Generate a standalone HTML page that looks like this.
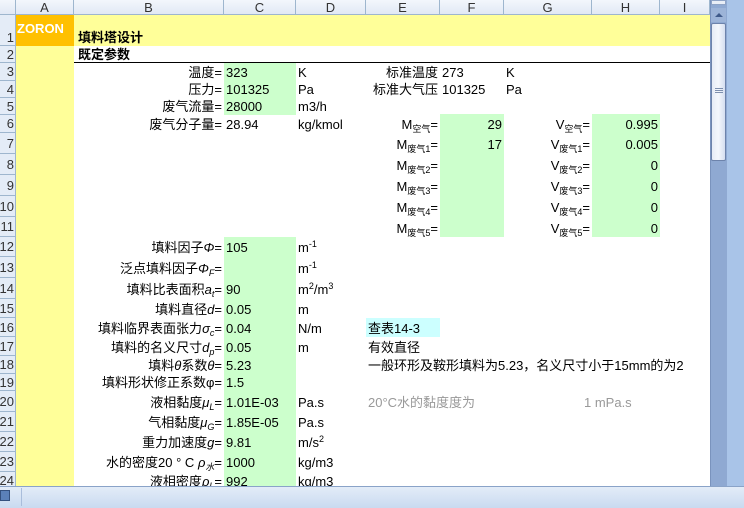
<!DOCTYPE html>
<html><head><meta charset="utf-8"><style>
*{margin:0;padding:0;box-sizing:border-box}
body{width:744px;height:508px;overflow:hidden;background:#fff;position:relative;font-family:"Liberation Sans","Noto Sans CJK SC",sans-serif;font-size:13px;color:#000}
.a{position:absolute}
.hd{position:absolute;background:linear-gradient(#f3f7fc,#e1e9f5);border-right:1px solid #9eb6ce;border-bottom:1px solid #9eb6ce;color:#333;font-size:13px;text-align:center;line-height:15px}
.rh{position:absolute;left:0;width:16px;background:#e4ecf7;border-bottom:1px solid #9eb6ce;border-right:1px solid #9eb6ce;color:#333;font-size:13px;text-align:right;padding-right:1px;overflow:hidden;display:flex;align-items:center;justify-content:flex-end}
.c{position:absolute;white-space:nowrap;display:flex;align-items:flex-end;padding:0 2px 0 2px}
.c>span{display:block;line-height:16px}
.r{justify-content:flex-end}
sub{font-size:9px;vertical-align:-3px;line-height:0}
sup{font-size:9px;vertical-align:5px;line-height:0}
i{font-style:italic}
.g{color:#999}
</style></head><body>
<div class="a" style="left:16px;top:15px;width:58px;height:475px;background:#ffff99"></div>
<div class="a" style="left:16px;top:15px;width:58px;height:31px;background:#ffc000"></div>
<div class="a" style="left:74px;top:15px;width:636px;height:31px;background:#ffff99"></div>
<div class="a" style="left:224px;top:63px;width:72px;height:52px;background:#ccffcc"></div>
<div class="a" style="left:224px;top:237px;width:72px;height:253px;background:#ccffcc"></div>
<div class="a" style="left:440px;top:114px;width:64px;height:123px;background:#ccffcc"></div>
<div class="a" style="left:592px;top:114px;width:68px;height:123px;background:#ccffcc"></div>
<div class="a" style="left:366px;top:318px;width:74px;height:19px;background:#ccffff"></div>
<div class="a" style="left:74px;top:62px;width:636px;height:1px;background:#000"></div>

<div class="hd" style="left:0;top:0;width:16px;height:15px"></div>
<div class="hd" style="left:16px;top:0;width:58px;height:15px">A</div>
<div class="hd" style="left:74px;top:0;width:150px;height:15px">B</div>
<div class="hd" style="left:224px;top:0;width:72px;height:15px">C</div>
<div class="hd" style="left:296px;top:0;width:70px;height:15px">D</div>
<div class="hd" style="left:366px;top:0;width:74px;height:15px">E</div>
<div class="hd" style="left:440px;top:0;width:64px;height:15px">F</div>
<div class="hd" style="left:504px;top:0;width:88px;height:15px">G</div>
<div class="hd" style="left:592px;top:0;width:68px;height:15px">H</div>
<div class="hd" style="left:660px;top:0;width:50px;height:15px">I</div>

<div class="rh" style="top:15px;height:31px;align-items:flex-end">1</div>
<div class="rh" style="top:46px;height:17px">2</div>
<div class="rh" style="top:63px;height:18px">3</div>
<div class="rh" style="top:81px;height:17px">4</div>
<div class="rh" style="top:98px;height:17px">5</div>
<div class="rh" style="top:115px;height:18px">6</div>
<div class="rh" style="top:133px;height:21px">7</div>
<div class="rh" style="top:154px;height:21px">8</div>
<div class="rh" style="top:175px;height:21px">9</div>
<div class="rh" style="top:196px;height:21px">10</div>
<div class="rh" style="top:217px;height:20px">11</div>
<div class="rh" style="top:237px;height:20px">12</div>
<div class="rh" style="top:257px;height:21px">13</div>
<div class="rh" style="top:278px;height:21px">14</div>
<div class="rh" style="top:299px;height:19px">15</div>
<div class="rh" style="top:318px;height:19px">16</div>
<div class="rh" style="top:337px;height:19px">17</div>
<div class="rh" style="top:356px;height:18px">18</div>
<div class="rh" style="top:374px;height:17px">19</div>
<div class="rh" style="top:391px;height:21px">20</div>
<div class="rh" style="top:412px;height:20px">21</div>
<div class="rh" style="top:432px;height:20px">22</div>
<div class="rh" style="top:452px;height:20px">23</div>
<div class="rh" style="top:472px;height:18px">24</div>

<div class="a" style="left:17px;top:21px;color:#fff;font-weight:bold;font-size:13px">ZORON</div>
<div class="c" style="left:76px;top:15px;height:31px;font-weight:bold"><span>填料塔设计</span></div>
<div class="c" style="left:76px;top:46px;height:17px;font-weight:bold"><span>既定参数</span></div>

<div class="c r" style="left:74px;top:63px;width:150px;height:18px"><span>温度=</span></div>
<div class="c" style="left:224px;top:63px;height:18px"><span>323</span></div>
<div class="c" style="left:296px;top:63px;height:18px"><span>K</span></div>
<div class="c r" style="left:366px;top:63px;width:74px;height:18px"><span>标准温度</span></div>
<div class="c" style="left:440px;top:63px;height:18px"><span>273</span></div>
<div class="c" style="left:504px;top:63px;height:18px"><span>K</span></div>
<div class="c r" style="left:74px;top:81px;width:150px;height:17px"><span>压力=</span></div>
<div class="c" style="left:224px;top:81px;height:17px"><span>101325</span></div>
<div class="c" style="left:296px;top:81px;height:17px"><span>Pa</span></div>
<div class="c r" style="left:340px;top:81px;width:100px;height:17px"><span>标准大气压</span></div>
<div class="c" style="left:440px;top:81px;height:17px"><span>101325</span></div>
<div class="c" style="left:504px;top:81px;height:17px"><span>Pa</span></div>
<div class="c r" style="left:74px;top:98px;width:150px;height:17px"><span>废气流量=</span></div>
<div class="c" style="left:224px;top:98px;height:17px"><span>28000</span></div>
<div class="c" style="left:296px;top:98px;height:17px"><span>m3/h</span></div>
<div class="c r" style="left:74px;top:115px;width:150px;height:18px"><span>废气分子量=</span></div>
<div class="c" style="left:224px;top:115px;height:18px"><span>28.94</span></div>
<div class="c" style="left:296px;top:115px;height:18px"><span>kg/kmol</span></div>

<div class="c r" style="left:366px;top:115px;width:74px;height:18px"><span>M<sub>空气</sub>=</span></div>
<div class="c r" style="left:440px;top:115px;width:64px;height:18px"><span>29</span></div>
<div class="c r" style="left:504px;top:115px;width:88px;height:18px"><span>V<sub>空气</sub>=</span></div>
<div class="c r" style="left:592px;top:115px;width:68px;height:18px"><span>0.995</span></div>
<div class="c r" style="left:366px;top:133px;width:74px;height:20px"><span>M<sub>废气1</sub>=</span></div>
<div class="c r" style="left:440px;top:133px;width:64px;height:20px"><span>17</span></div>
<div class="c r" style="left:504px;top:133px;width:88px;height:20px"><span>V<sub>废气1</sub>=</span></div>
<div class="c r" style="left:592px;top:133px;width:68px;height:20px"><span>0.005</span></div>
<div class="c r" style="left:366px;top:154px;width:74px;height:20px"><span>M<sub>废气2</sub>=</span></div>
<div class="c r" style="left:504px;top:154px;width:88px;height:20px"><span>V<sub>废气2</sub>=</span></div>
<div class="c r" style="left:592px;top:154px;width:68px;height:20px"><span>0</span></div>
<div class="c r" style="left:366px;top:175px;width:74px;height:20px"><span>M<sub>废气3</sub>=</span></div>
<div class="c r" style="left:504px;top:175px;width:88px;height:20px"><span>V<sub>废气3</sub>=</span></div>
<div class="c r" style="left:592px;top:175px;width:68px;height:20px"><span>0</span></div>
<div class="c r" style="left:366px;top:196px;width:74px;height:20px"><span>M<sub>废气4</sub>=</span></div>
<div class="c r" style="left:504px;top:196px;width:88px;height:20px"><span>V<sub>废气4</sub>=</span></div>
<div class="c r" style="left:592px;top:196px;width:68px;height:20px"><span>0</span></div>
<div class="c r" style="left:366px;top:217px;width:74px;height:20px"><span>M<sub>废气5</sub>=</span></div>
<div class="c r" style="left:504px;top:217px;width:88px;height:20px"><span>V<sub>废气5</sub>=</span></div>
<div class="c r" style="left:592px;top:217px;width:68px;height:20px"><span>0</span></div>

<div class="c r" style="left:40px;top:237px;width:184px;height:19px"><span>填料因子<i>Φ</i>=</span></div>
<div class="c" style="left:224px;top:237px;height:19px"><span>105</span></div>
<div class="c" style="left:296px;top:237px;height:19px"><span>m<sup>-1</sup></span></div>
<div class="c r" style="left:40px;top:257px;width:184px;height:20px"><span>泛点填料因子<i>Φ<sub>F</sub></i>=</span></div>
<div class="c" style="left:296px;top:257px;height:20px"><span>m<sup>-1</sup></span></div>
<div class="c r" style="left:40px;top:278px;width:184px;height:20px"><span>填料比表面积<i>a<sub>t</sub></i>=</span></div>
<div class="c" style="left:224px;top:278px;height:20px"><span>90</span></div>
<div class="c" style="left:296px;top:278px;height:20px"><span>m<sup>2</sup>/m<sup>3</sup></span></div>
<div class="c r" style="left:40px;top:299px;width:184px;height:19px"><span>填料直径<i>d</i>=</span></div>
<div class="c" style="left:224px;top:299px;height:19px"><span>0.05</span></div>
<div class="c" style="left:296px;top:299px;height:19px"><span>m</span></div>
<div class="c r" style="left:40px;top:318px;width:184px;height:19px"><span>填料临界表面张力<i>σ<sub>c</sub></i>=</span></div>
<div class="c" style="left:224px;top:318px;height:19px"><span>0.04</span></div>
<div class="c" style="left:296px;top:318px;height:19px"><span>N/m</span></div>
<div class="c" style="left:366px;top:318px;height:19px"><span>查表14-3</span></div>
<div class="c r" style="left:40px;top:337px;width:184px;height:19px"><span>填料的名义尺寸<i>d<sub>p</sub></i>=</span></div>
<div class="c" style="left:224px;top:337px;height:19px"><span>0.05</span></div>
<div class="c" style="left:296px;top:337px;height:19px"><span>m</span></div>
<div class="c" style="left:366px;top:337px;height:19px"><span>有效直径</span></div>
<div class="c r" style="left:40px;top:356px;width:184px;height:18px"><span>填料<i>θ</i>系数<i>θ</i>=</span></div>
<div class="c" style="left:224px;top:356px;height:18px"><span>5.23</span></div>
<div class="c" style="left:366px;top:356px;height:18px"><span>一般环形及鞍形填料为5.23，名义尺寸小于15mm的为2</span></div>
<div class="c r" style="left:40px;top:374px;width:184px;height:17px"><span>填料形状修正系数φ=</span></div>
<div class="c" style="left:224px;top:374px;height:17px"><span>1.5</span></div>
<div class="c r" style="left:40px;top:391px;width:184px;height:20px"><span>液相黏度<i>μ<sub>L</sub></i>=</span></div>
<div class="c" style="left:224px;top:391px;height:20px"><span>1.01E-03</span></div>
<div class="c" style="left:296px;top:391px;height:20px"><span>Pa.s</span></div>
<div class="c g" style="left:366px;top:391px;height:20px"><span>20°C水的黏度度为</span></div>
<div class="c g" style="left:582px;top:391px;height:20px"><span>1 mPa.s</span></div>
<div class="c r" style="left:40px;top:412px;width:184px;height:19px"><span>气相黏度<i>μ<sub>G</sub></i>=</span></div>
<div class="c" style="left:224px;top:412px;height:19px"><span>1.85E-05</span></div>
<div class="c" style="left:296px;top:412px;height:19px"><span>Pa.s</span></div>
<div class="c r" style="left:40px;top:432px;width:184px;height:19px"><span>重力加速度<i>g</i>=</span></div>
<div class="c" style="left:224px;top:432px;height:19px"><span>9.81</span></div>
<div class="c" style="left:296px;top:432px;height:19px"><span>m/s<sup>2</sup></span></div>
<div class="c r" style="left:40px;top:452px;width:184px;height:19px"><span>水的密度20 ° C <i>ρ<sub>水</sub></i>=</span></div>
<div class="c" style="left:224px;top:452px;height:19px"><span>1000</span></div>
<div class="c" style="left:296px;top:452px;height:19px"><span>kg/m3</span></div>
<div class="c r" style="left:40px;top:472px;width:184px;height:18px"><span>液相密度<i>ρ<sub>L</sub></i>=</span></div>
<div class="c" style="left:224px;top:472px;height:18px"><span>992</span></div>
<div class="c" style="left:296px;top:472px;height:18px"><span>kg/m3</span></div>

<div class="a" style="left:710px;top:0;width:17px;height:486px;background:#8fa9d2;border-left:1px solid #7a93bd"></div>
<div class="a" style="left:711px;top:0;width:15px;height:5px;background:#e9eef7;border:1px solid #8ea3c6"></div>
<div class="a" style="left:711px;top:8px;width:15px;height:14px;background:#9db4d8"></div>
<div class="a" style="left:715px;top:13px;width:0;height:0;border-left:4px solid transparent;border-right:4px solid transparent;border-bottom:4px solid #3f5a8a"></div>
<div class="a" style="left:711px;top:23px;width:15px;height:138px;background:linear-gradient(90deg,#e6ecf6,#f4f7fc,#d5def0);border:1px solid #6d83ab;border-radius:2px"></div>
<div class="a" style="left:715px;top:88px;width:8px;height:5px;border-top:1px solid #7d8fae;border-bottom:1px solid #7d8fae"></div>
<div class="a" style="left:715px;top:90px;width:8px;height:1px;background:#7d8fae"></div>
<div class="a" style="left:727px;top:0;width:17px;height:486px;background:#a9c4e8"></div>
<div class="a" style="left:0;top:486px;width:744px;height:22px;background:linear-gradient(#e3ecf8,#c9daf0);border-top:1px solid #8aa3c8"></div>
<div class="a" style="left:0;top:490px;width:10px;height:11px;background:#5b80b8;border:1px solid #34507e"></div>
<div class="a" style="left:21px;top:488px;width:1px;height:18px;background:#a9bddb"></div>
</body></html>
